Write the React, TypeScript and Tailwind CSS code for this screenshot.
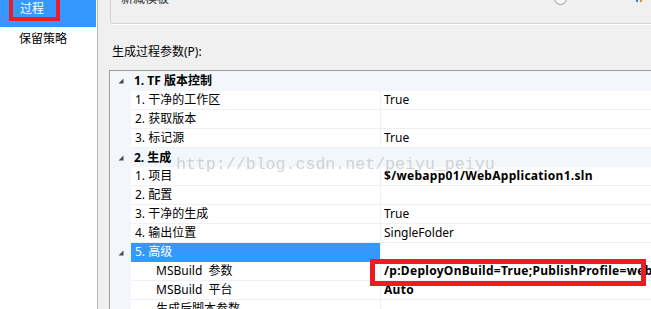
import React from 'react';

type Row =
  | { kind: 'cat'; label: string }
  | { kind: 'item'; label: string; value?: string; bold?: boolean; sub?: boolean; selected?: boolean; expand?: boolean; mark?: boolean };

const rows: Row[] = [
  { kind: 'cat', label: '1. TF 版本控制' },
  { kind: 'item', label: '1. 干净的工作区', value: 'True' },
  { kind: 'item', label: '2. 获取版本', value: '' },
  { kind: 'item', label: '3. 标记源', value: 'True' },
  { kind: 'cat', label: '2. 生成' },
  { kind: 'item', label: '1. 项目', value: '$/webapp01/WebApplication1.sln', bold: true },
  { kind: 'item', label: '2. 配置', value: '' },
  { kind: 'item', label: '3. 干净的生成', value: 'True' },
  { kind: 'item', label: '4. 输出位置', value: 'SingleFolder' },
  { kind: 'item', label: '5. 高级', value: '', selected: true, expand: true },
  { kind: 'item', label: 'MSBuild  参数', value: '/p:DeployOnBuild=True;PublishProfile=webapp01', bold: true, sub: true, mark: true },
  { kind: 'item', label: 'MSBuild  平台', value: 'Auto', bold: true, sub: true },
  { kind: 'item', label: '生成后脚本参数', value: '', sub: true },
];

const Arrow = () => (
  <svg width="6" height="6" viewBox="0 0 6 6" className="block">
    <polygon points="5.5,0.5 5.5,5.5 0.5,5.5" fill="#4a4a4a" />
  </svg>
);

const PropRow = ({ row, first }: { row: Row; first: boolean }) => {
  if (row.kind === 'cat') {
    return (
      <div className={`flex items-center bg-[#f3f6fb] ${first ? 'h-[20px]' : 'h-[19px]'}`}>
        <div className="w-[21px] shrink-0 flex justify-end pr-[7px]">
          <Arrow />
        </div>
        <span className="pl-[3px] font-bold text-[#000]">{row.label}</span>
      </div>
    );
  }
  return (
    <div className="flex h-[19px]">
      <div className="w-[21px] shrink-0 flex items-center justify-end pr-[7px]">{row.expand && <Arrow />}</div>
      <div
        className={`w-[249px] shrink-0 flex items-center border-b ${
          row.selected ? 'bg-[#3399ff] text-white border-[#3399ff]' : 'bg-white text-[#000] border-[#eef1f6]'
        } ${row.sub ? 'pl-[25px]' : 'pl-[4px]'} whitespace-pre`}
      >
        {row.label}
      </div>
      <div className={`relative flex-1 min-w-0 flex items-center bg-white border-b border-l border-[#eef1f6] pl-[3px] whitespace-nowrap ${row.mark ? 'z-10' : ''}`}>
        <span className={row.bold ? 'font-bold tracking-[0.3px] text-[#000]' : 'text-[#000]'}>{row.value}</span>
        {row.mark && (
          <div className="absolute left-[-11px] top-[-3px] w-[276px] h-[27px] border-[5px] border-[#ed1c24]" />
        )}
      </div>
    </div>
  );
};

export default function App() {
  return (
    <div
      className="w-[651px] h-[309px] overflow-hidden flex text-[12px] leading-[16px] text-[#1e1e1e]"
      style={{ fontFamily: '"Noto Sans", "Noto Sans CJK SC", sans-serif' }}
    >
      {/* left nav */}
      <div className="w-[98px] shrink-0 bg-white border-r border-[#b9b9b9] flex flex-col">
        <div className="relative h-[27px] w-[96px] bg-[#3399ff] shrink-0">
          <div className="absolute left-[9px] top-[-4px] w-[51px] h-[25px] border-[4px] border-[#ed1c24]" />
          <span className="absolute left-[20px] top-[1px] text-white">过程</span>
        </div>
        <div className="pl-[19px] pt-[4px] text-[#000]">保留策略</div>
      </div>

      {/* main */}
      <div className="relative flex-1 bg-[#f0f0f0] flex flex-col">
        <div className="relative shrink-0 ml-[12px] h-[24px] border-l border-b border-[#d4d4d4] rounded-bl-[4px] shadow-[1px_1px_0_#ffffff]">
          <span className="absolute left-[10px] top-[-9px] text-[#333]">新减模板</span>
          <div className="absolute left-[443px] top-[-8px] w-[13px] h-[13px] rounded-full border border-[#9a9a9a] bg-[#f7f7f7]" />
          <div className="absolute left-[525px] top-0 w-[2px] h-[2px] bg-[#3b7fd0]" />
          <div className="absolute left-[529px] top-0 w-[2px] h-[2px] bg-[#d98a2b]" />
        </div>

        <div className="shrink-0 ml-[14px] mt-[20px] text-[#000]">生成过程参数(P):</div>

        <div className="relative shrink-0 ml-[11px] mt-[10px] border-l border-t border-[#a0a0a0] bg-[#f3f6fb]">
          <div className="flex flex-col border-r border-[#e6e9ee] w-[542px]">
            {rows.map((r, i) => (
              <PropRow key={i} row={r} first={i === 0} />
            ))}
          </div>
          <div
            className="absolute left-[66px] top-[84px] z-20 text-[16.6px] leading-[20px] text-[#c9c9c9]/80 whitespace-nowrap pointer-events-none"
            style={{ fontFamily: '"Liberation Mono", monospace' }}
          >
            http://blog.csdn.net/peiyu_peiyu
          </div>
        </div>
      </div>
    </div>
  );
}
